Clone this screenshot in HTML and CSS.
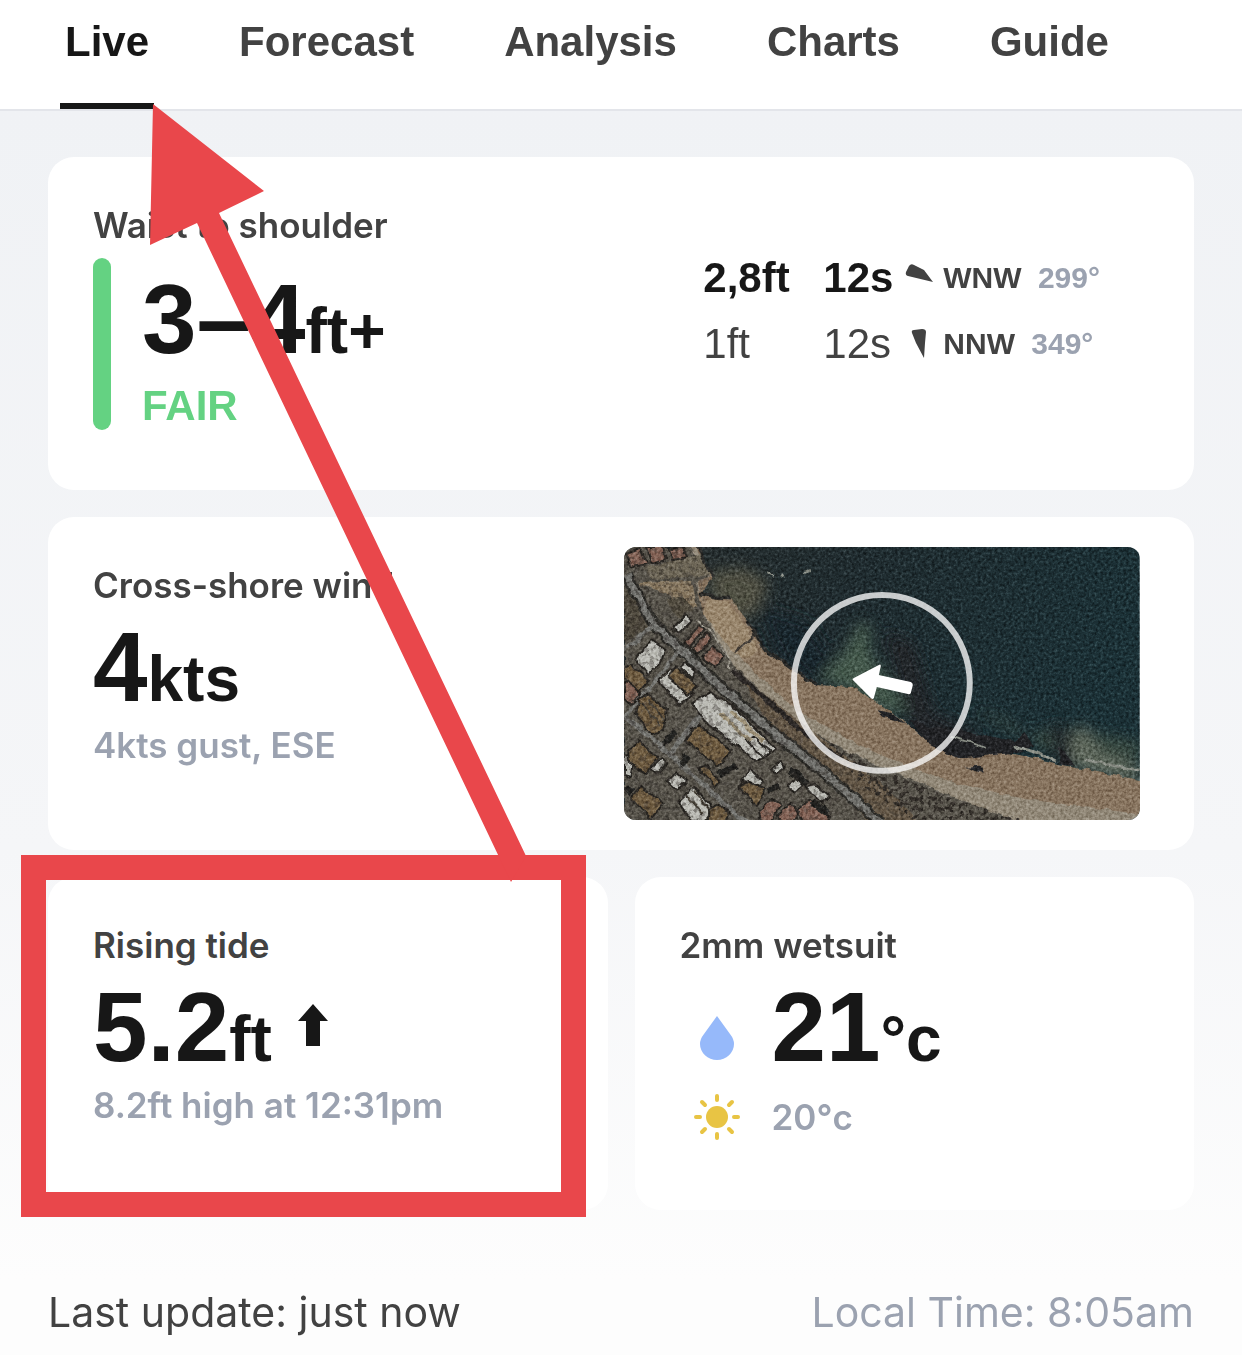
FILE: index.html
```html
<!DOCTYPE html>
<html lang="en">
<head>
    <meta charset="UTF-8">
    <meta name="viewport" content="width=device-width, initial-scale=1.0">
    <title>Surf report</title>
    <link rel="stylesheet" href="styles.css">
</head>
<body>
    <nav class="tabs">
        <a href="#live" class="active">Live</a>
        <a href="#forecast">Forecast</a>
        <a href="#analysis">Analysis</a>
        <a href="#charts">Charts</a>
        <a href="#guide">Guide</a>
    </nav>
    <main>
        <section class="card surf">
            <div>
                <h2>Waist to shoulder</h2>
                <div class="rating">
                    <div>
                        <p class="big">3–4<span>ft+</span></p>
                        <strong>FAIR</strong>
                    </div>
                </div>
            </div>
            <table class="swells">
                <tr class="primary">
                    <td>2,8ft</td>
                    <td>12s</td>
                    <td class="icon"><svg width="30" height="30" viewBox="0 0 30 30"><path d="M2 9 5 3Q7 0 10 2L20 7 29 19 4 13Q1 12 2 9Z"/></svg></td>
                    <td class="direction">WNW <span>299°</span></td>
                </tr>
                <tr>
                    <td>1ft</td>
                    <td>12s</td>
                    <td class="icon"><svg width="30" height="30" viewBox="0 0 30 30"><path d="M8 4Q7 1 10 1L18 0Q22 0 22 3L21 14 20 29 12 14Z"/></svg></td>
                    <td class="direction">NNW <span>349°</span></td>
                </tr>
            </table>
        </section>

        <section class="card wind">
            <div>
                <h2>Cross-shore wind</h2>
                <p class="big">4<span>kts</span></p>
                <p class="sub">4kts gust, ESE</p>
            </div>
            <svg class="map" viewBox="0 0 516 273" role="img" aria-label="Wind direction">
                <defs>
                    <linearGradient id="sea" x1="0" y1="0" x2="1" y2=".2">
                        <stop offset="0" stop-color="#2e3434"/>
                        <stop offset=".45" stop-color="#243135"/>
                        <stop offset="1" stop-color="#1f363c"/>
                    </linearGradient>
                    <filter id="soft" x="-20%" y="-20%" width="140%" height="140%"><feGaussianBlur stdDeviation="7"/></filter>
                    <filter id="edge" x="-5%" y="-5%" width="110%" height="110%" color-interpolation-filters="sRGB">
                        <feTurbulence type="fractalNoise" baseFrequency=".1" numOctaves="2" result="n"/>
                        <feDisplacementMap in="SourceGraphic" in2="n" scale="6" xChannelSelector="R" yChannelSelector="G"/>
                        <feGaussianBlur stdDeviation=".6"/>
                    </filter>
                    <filter id="grain" x="0" y="0" width="100%" height="100%" color-interpolation-filters="sRGB">
                        <feTurbulence type="fractalNoise" baseFrequency=".35" numOctaves="3"/>
                        <feColorMatrix values="1 0 0 0 -.08 1 0 0 0 -.08 1 0 0 0 -.08 0 0 0 0 1"/>
                    </filter>
                    <filter id="scrub" x="0" y="0" width="100%" height="100%" color-interpolation-filters="sRGB">
                        <feTurbulence type="fractalNoise" baseFrequency=".2" numOctaves="3"/>
                        <feColorMatrix values="0 0 0 0 .22 0 0 0 0 .2 0 0 0 0 .18 8 0 0 0 -4"/>
                        <feComposite in2="SourceGraphic" operator="in"/>
                    </filter>
                </defs>
                <rect width="516" height="273" fill="url(#sea)"/>

                <!-- shallow water and reef -->
                <g filter="url(#soft)">
                    <path d="M84 25 120 20 145 35 135 62 115 75 88 50Z" fill="#57564a"/>
                    <path d="M195 132 220 105 236 75 246 78 246 105 258 125 285 165 265 165 225 142Z" fill="#4b6152"/>
                    <path d="M345 160 385 175 425 205 516 215V195L440 180 400 190Z" fill="#3d4f46"/>
                    <path d="M445 200 460 175 475 205 516 220V238L440 218Z" fill="#667064"/>
                    <path d="M260 85 290 95 310 165 345 180 360 200 330 210 290 190Z" fill="#252a2e"/>
                    <path d="M135 60 185 75 210 115 190 134 155 110Z" fill="#1e2b30"/>
                    <path d="M425 175 445 180 450 225 430 215Z" fill="#252d30"/>
                </g>

                <!-- beach -->
                <g filter="url(#edge)">
                    <path d="M0 0H73L89 30 76 48 84 50 106 51 123 73 139 103 169 123 193 138 229 140 256 158 283 176 306 196 333 206 379 205 410 211 446 220 520 234V280H0Z" fill="#8f7c67"/>
                    <path d="M0 0H70L86 29 74 32 78 66 100 90 130 125 176 165 220 190 256 208 330 236 400 252 520 268V280H0Z" fill="#999080"/>
                    <path d="M0 0H66L86 30 72 34 79 66 109 118 176 177 209 196 256 220 329 250 406 280H0Z" fill="#625e55"/>
                    <path d="M12 36 68 34 73 60 60 62 42 46Z" fill="#8e7f68"/>
                    <path d="M20 20 76 8 88 28 28 33Z" fill="#777060"/>
                    <path d="M0 42 20 55 30 78 0 95Z" fill="#565044"/>
                    <path d="M42 53 57 48 70 62 53 72Z" fill="#5b5548"/>
                    <path d="M79 66 84 52 104 54 120 76 135 105 122 112 106 102Z" fill="#a08e75"/>
                    <path d="M112 124 170 170 220 208 256 235 300 280H250L210 240 150 185Z" fill="#6d604f"/>
                </g>
                <g filter="url(#edge)">
                    <path d="M73 0 90 30M76 46 90 50 106 51M123 73 138 100 165 120 194 138" stroke="#30302e" stroke-width="3" fill="none"/>
                    <path d="M111 105 130 88" stroke="#453f39" stroke-width="2"/>
                    <path d="M109 124 140 150 174 181 214 211" stroke="#302c2a" stroke-width="5" fill="none"/>
                    <path d="M252 164 271 168 281 176 259 170ZM285 172 306 180 330 182 360 188 390 194 402 184 410 200 391 206 335 212 306 198ZM434 200 442 207 452 219 439 218ZM340 220 357 219 360 227Z" fill="#26272a"/>
                </g>
                <path d="M197 190 216 201 256 222 329 252 400 273H290L240 240Z" filter="url(#scrub)"/>

                <!-- surf line -->
                <g stroke="#92968e" fill="none" filter="url(#edge)">
                    <path d="M145 26 150 29M157 30 160 28M180 26 186 24M328 190 345 195 362 201" stroke-width="2"/>
                    <path d="M390 199 407 204 432 214M462 212 495 220 520 224" stroke-width="3"/>
                </g>

                <!-- roads -->
                <g fill="none" stroke="#7c7c78" stroke-linejoin="round" filter="url(#edge)">
                    <path d="M3 28 14 50 29 76 89 133 145 182 196 222 258 277" stroke="#33322e" stroke-width="12"/>
                    <path d="M3 28 14 50 29 76 89 133 145 182 196 222 258 277" stroke-width="7"/>
                    <path d="M0 104 30 77M0 172 56 103" stroke-width="4"/>
                    <path d="M0 168 46 207 110 266 124 277M48 205 78 166" stroke-width="5"/>
                    <path d="M72 73 92 90 106 112 105 122" stroke="#aaa69b" stroke-width="2"/>
                </g>

                <!-- buildings -->
                <g stroke="#2e2b27" stroke-width="2" filter="url(#edge)">
                    <g fill="#8c6c5f">
                        <path d="M2 6 16 1 23 17 8 20ZM22 0 38 0 42 12 28 16ZM44 1 60 0 64 10 48 13Z"/>
                        <path d="M60 96 75 79 80 83 65 101ZM68 103 82 87 87 92 73 109ZM78 111 88 98 100 109 92 120Z"/>
                        <path d="M135 265 148 252 158 259 146 275H137ZM154 269 166 256 176 264 169 275H157ZM172 262 185 254 206 271 202 275H180Z"/>
                        <path d="M0 139 5 134 17 146 8 158 0 151Z"/>
                    </g>
                    <g fill="#c1c1bb">
                        <path d="M49 81 62 68 68 73 55 86Z"/>
                        <path d="M11 112 28 93 41 103 37 116 24 127Z"/>
                        <path d="M34 134 47 121 69 148 56 158Z"/>
                        <path d="M56 120 61 116 72 125 68 132Z"/>
                        <path d="M68 156 86 145 111 161 152 202 132 215 79 173Z"/>
                        <path d="M122 193 130 190 146 205 139 211Z"/>
                        <path d="M43 235 53 225 63 234 53 245Z"/>
                        <path d="M118 233 126 222 139 235 131 243Z"/>
                        <path d="M54 255 69 240 90 263 80 275H68Z"/>
                        <path d="M26 222 37 211 43 217 32 227Z"/>
                        <path d="M0 208 10 211 6 230 0 228Z"/>
                        <path d="M148 222 156 215 160 220 152 227ZM164 240 172 232 178 239 171 245Z"/>
                        <path d="M183 240 190 237 205 249 198 256Z"/>
                    </g>
                    <g fill="#786549">
                        <path d="M44 129 52 120 73 138 64 148Z"/>
                        <path d="M61 193 74 177 108 204 94 219Z"/>
                        <path d="M15 153 23 146 43 164 39 184 28 187 12 169Z"/>
                        <path d="M0 122 7 119 24 132 16 145 0 130Z"/>
                        <path d="M4 204 16 195 34 211 22 226 5 216Z"/>
                        <path d="M7 250 17 239 39 257 26 273Z"/>
                        <path d="M115 240 125 235 142 242 132 259Z"/>
                        <path d="M75 221 81 219 96 235 91 241Z"/>
                        <path d="M84 263 95 257 105 267 99 275H84Z"/>
                    </g>
                    <path d="M96 166 128 195M106 163 139 194" stroke="#a79b82" stroke-width="4"/>
                    <path d="M18 155 36 179M23 151 40 173M62 247 79 267M70 244 84 262" stroke="#504a40" stroke-width="2"/>
                    <path d="M165 223 184 237M188 255 205 267M38 197 52 185M63 209 57 218M95 228 112 219M145 244 155 239M2 240 8 246" stroke="#262624" stroke-width="7"/>
                </g>
                <path d="M0 0H66L86 34 79 66 109 118 176 183 256 230 300 273H0Z" filter="url(#scrub)" opacity=".35"/>
                <rect class="grain" width="516" height="273" filter="url(#grain)"/>

                <circle cx="258" cy="136" r="88" fill="none" stroke="#fff" stroke-opacity=".76" stroke-width="6"/>
                <path d="M230 131 255 118Q257 117 257 119L255 128 287 135Q289 136 289 138L287 146Q286 148 284 147L253 140 250 151Q249 153 247 151L229 133Q228 132 230 131Z" fill="#fff"/>
            </svg>
        </section>

        <section class="card">
            <h2>Rising tide</h2>
            <p class="big">5.2<span>ft</span><svg class="up" width="30" height="42" viewBox="0 0 30 42"><path d="M15 0 30 17H22V42H8V17H0Z"/></svg></p>
            <p class="sub">8.2ft high at 12:31pm</p>
        </section>

        <section class="card temps">
            <h2>2mm wetsuit</h2>
            <div class="temp water">
                <svg width="46" height="46" viewBox="0 0 46 46"><path d="M23 1 36 19Q40 24 40 29A17 16 0 0 1 6 29Q6 24 10 19Z" fill="#96b9fa"/></svg>
                <p class="big">21<span>°c</span></p>
            </div>
            <div class="temp air">
                <svg width="46" height="46" viewBox="0 0 46 46">
                    <circle cx="23" cy="23" r="11" fill="#e8c444"/>
                    <path d="M23 2V6M23 40V44M2 23H6M40 23H44M8 8 11 11M35 35 38 38M38 8 35 11M11 35 8 38" stroke="#e8c444" stroke-width="4" stroke-linecap="round"/>
                </svg>
                <p class="sub">20°c</p>
            </div>
        </section>
    </main>
    <footer>
        <span>Last update: just now</span>
        <span class="local">Local Time: 8:05am</span>
    </footer>

    <svg class="marker" viewBox="0 0 1242 1355" aria-hidden="true">
        <path d="M21 855H586V1217H21ZM46 880V1192H561V880Z" fill="#e9474b" fill-rule="evenodd"/>
        <path d="M153 104 264 191 219 213 526 856 511 882 197 223 150 245Z" fill="#e9474b"/>
    </svg>
</body>
</html>
```
FILE: styles.css
```css
*{margin:0;padding:0;box-sizing:border-box}
body{
    position: relative;
    background: linear-gradient(#f0f2f5 110px, #f5f6f8 850px, #fdfdfd 1280px);
    color: #424242;
    font-family: Inter, "Liberation Sans", sans-serif;
}
.tabs{
    display: flex;
    gap: 80px;
    padding: 0 60px;
    background-color: #fff;
    border-bottom: 2px solid #e3e5ea;
}
.tabs a{
    padding: 18px 5px 37px;
    border-bottom: 6px solid transparent;
    color: #424242;
    font: bold 42px/48px "Liberation Sans", sans-serif;
    text-decoration: none;
}
.tabs a.active{
    border-color: #171717;
    color: #171717;
}
main{
    display: grid;
    grid-template-columns: 1fr 1fr;
    gap: 27px;
    padding: 46px 48px;
}
.card{
    padding: 44px 45px 81px;
    background-color: #fff;
    border-radius: 26px;
}
.card h2{
    font-size: 35px;
    font-weight: 600;
    line-height: 48px;
}
.big{
    margin-top: 4px;
    color: #171717;
    font: bold 98px/108px "Liberation Sans", sans-serif;
}
.big span{
    font-size: 64px;
    line-height: 1;
}
.sub{
    color: #9ba2b0;
    font-size: 35px;
    font-weight: 600;
    line-height: 48px;
}
.surf,
.wind{
    grid-column: 1 / -1;
    display: flex;
    justify-content: space-between;
}
.surf{
    padding-right: 94px;
    padding-bottom: 60px;
}
.rating{
    display: flex;
    gap: 31px;
    margin-top: 9px;
}
.rating::before{
    content: "";
    width: 18px;
    background-color: #64d282;
    border-radius: 9px;
}
.rating .big{
    margin-top: 7px;
}
.rating strong{
    display: block;
    margin-top: 9px;
    color: #64d282;
    font: bold 42px/48px "Liberation Sans", sans-serif;
}
.swells{
    align-self: flex-start;
    margin-top: 44px;
    border-collapse: collapse;
    font-family: "Liberation Sans", sans-serif;
    font-size: 42px;
}
.swells td{
    height: 66px;
    min-width: 81px;
}
.swells td:first-child{
    min-width: 120px;
}
.swells .primary{
    color: #171717;
    font-weight: bold;
}
.swells .icon{
    min-width: 39px;
}
.swells svg{
    display: block;
    fill: #424242;
}
.swells .direction{
    color: #424242;
    font-size: 30px;
    font-weight: bold;
}
.direction span{
    margin-left: 8px;
    color: #9ba2b0;
}
.wind{
    align-items: center;
    padding: 0;
}
.wind > div{
    padding: 44px 0 81px 45px;
}
.map{
    width: 45%;
    margin-right: 54px;
    border-radius: 12px;
}
.grain{
    mix-blend-mode: soft-light;
    opacity: .8;
}
.up{
    margin-left: 26px;
    vertical-align: 15px;
    fill: #171717;
}
.temps{
    padding-bottom: 68px;
}
.temp{
    display: flex;
    align-items: center;
    gap: 32px;
    padding-left: 14px;
}
.water svg{
    margin-top: 26px;
}
.air{
    padding-top: 12px;
}
footer{
    display: flex;
    justify-content: space-between;
    padding: 32px 48px 19px;
    font-size: 41px;
    line-height: 48px;
}
.local{
    color: #9ba2b0;
}
/* arrow and frame drawn over the report */
.marker{
    position: absolute;
    top: 0;
    left: 0;
    width: 100%;
    pointer-events: none;
}
```
